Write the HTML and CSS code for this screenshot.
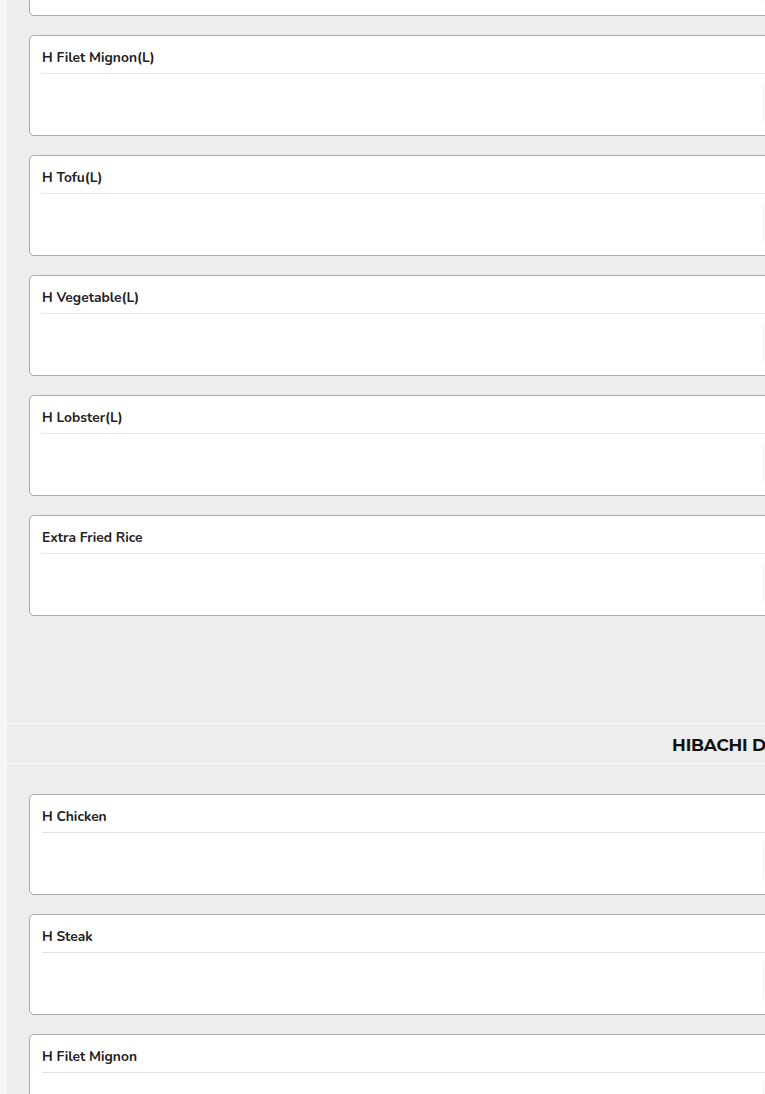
FILE: index.html
```html
<!DOCTYPE html>
<html lang="en">

<head>
    <meta charset="UTF-8">
    <meta name="viewport" content="width=device-width, initial-scale=1.0">
    <title>Menu</title>
    <link rel="stylesheet" href="styles.css">
</head>

<body>
    <main class="menu">

        <section class="category">
            <div class="items">
                <div class="item">
                    <div class="item-name">H Steak(L)</div>
                    <div class="item-body"><div class="item-desc"></div><div class="item-order"></div></div>
                </div>
                <div class="item">
                    <div class="item-name">H Filet Mignon(L)</div>
                    <div class="item-body"><div class="item-desc"></div><div class="item-order"></div></div>
                </div>
                <div class="item">
                    <div class="item-name">H Tofu(L)</div>
                    <div class="item-body"><div class="item-desc"></div><div class="item-order"></div></div>
                </div>
                <div class="item">
                    <div class="item-name">H Vegetable(L)</div>
                    <div class="item-body"><div class="item-desc"></div><div class="item-order"></div></div>
                </div>
                <div class="item">
                    <div class="item-name">H Lobster(L)</div>
                    <div class="item-body"><div class="item-desc"></div><div class="item-order"></div></div>
                </div>
                <div class="item">
                    <div class="item-name">Extra Fried Rice</div>
                    <div class="item-body"><div class="item-desc"></div><div class="item-order"></div></div>
                </div>
            </div>
        </section>

        <section class="category">
            <h2 class="category-title">HIBACHI DINNER</h2>
            <div class="items">
                <div class="item">
                    <div class="item-name">H Chicken</div>
                    <div class="item-body"><div class="item-desc"></div><div class="item-order"></div></div>
                </div>
                <div class="item">
                    <div class="item-name">H Steak</div>
                    <div class="item-body"><div class="item-desc"></div><div class="item-order"></div></div>
                </div>
                <div class="item">
                    <div class="item-name">H Filet Mignon</div>
                    <div class="item-body"><div class="item-desc"></div><div class="item-order"></div></div>
                </div>
                <div class="item">
                    <div class="item-name">H Shrimp</div>
                    <div class="item-body"><div class="item-desc"></div><div class="item-order"></div></div>
                </div>
            </div>
        </section>

    </main>
</body>

</html>
```

FILE: styles.css
```css
:root {
    --color-page: #f6f6f6;
    --color-panel: #ededed;
    --color-card: #ffffff;
    --color-card-border: #aaaaaa;
    --color-rule: #e3e3e3;
    --color-text: #1c1c1c;
}

html,
body {
    overflow: hidden;
}

body {
    margin: 0;
    padding: 0 0 0 6px;
    background-color: var(--color-page);
    color: var(--color-text);
    font-family: "Nunito", "Lato", "Open Sans", sans-serif;
}

/* the list is scrolled so the first card only shows its bottom edge */
.menu {
    width: 1480px;
    margin-top: -115px;
    border-left: 1px solid #fafafa;
    background-color: var(--color-panel);
}

.category-title {
    margin: 0;
    height: 36px;
    padding-top: 3px;
    line-height: 36px;
    border-top: 1px solid #f8f8f8;
    border-bottom: 1px solid #f8f8f8;
    text-align: center;
    font-family: "Montserrat", "Inter", sans-serif;
    font-size: 17px;
    font-weight: 700;
    letter-spacing: -0.2px;
    color: #111;
}

.items {
    display: flex;
    flex-direction: column;
    gap: 19px;
    padding: 30px 0 107px 22px;
}

.item {
    height: 99px;
    padding: 0 12px;
    background-color: var(--color-card);
    border: 1px solid var(--color-card-border);
    border-radius: 5px;
}

.item-name {
    padding: 12px 0 5px;
    line-height: 20px;
    font-size: 13.8px;
    font-weight: 700;
    color: #222;
    border-bottom: 1px solid var(--color-rule);
}

.item-body {
    display: flex;
    padding-top: 8px;
}

.item-desc {
    width: 721px;
}

.item-order {
    width: 120px;
    height: 38px;
    border: 1px solid #f1f1f1;
    border-radius: 3px;
}
```
